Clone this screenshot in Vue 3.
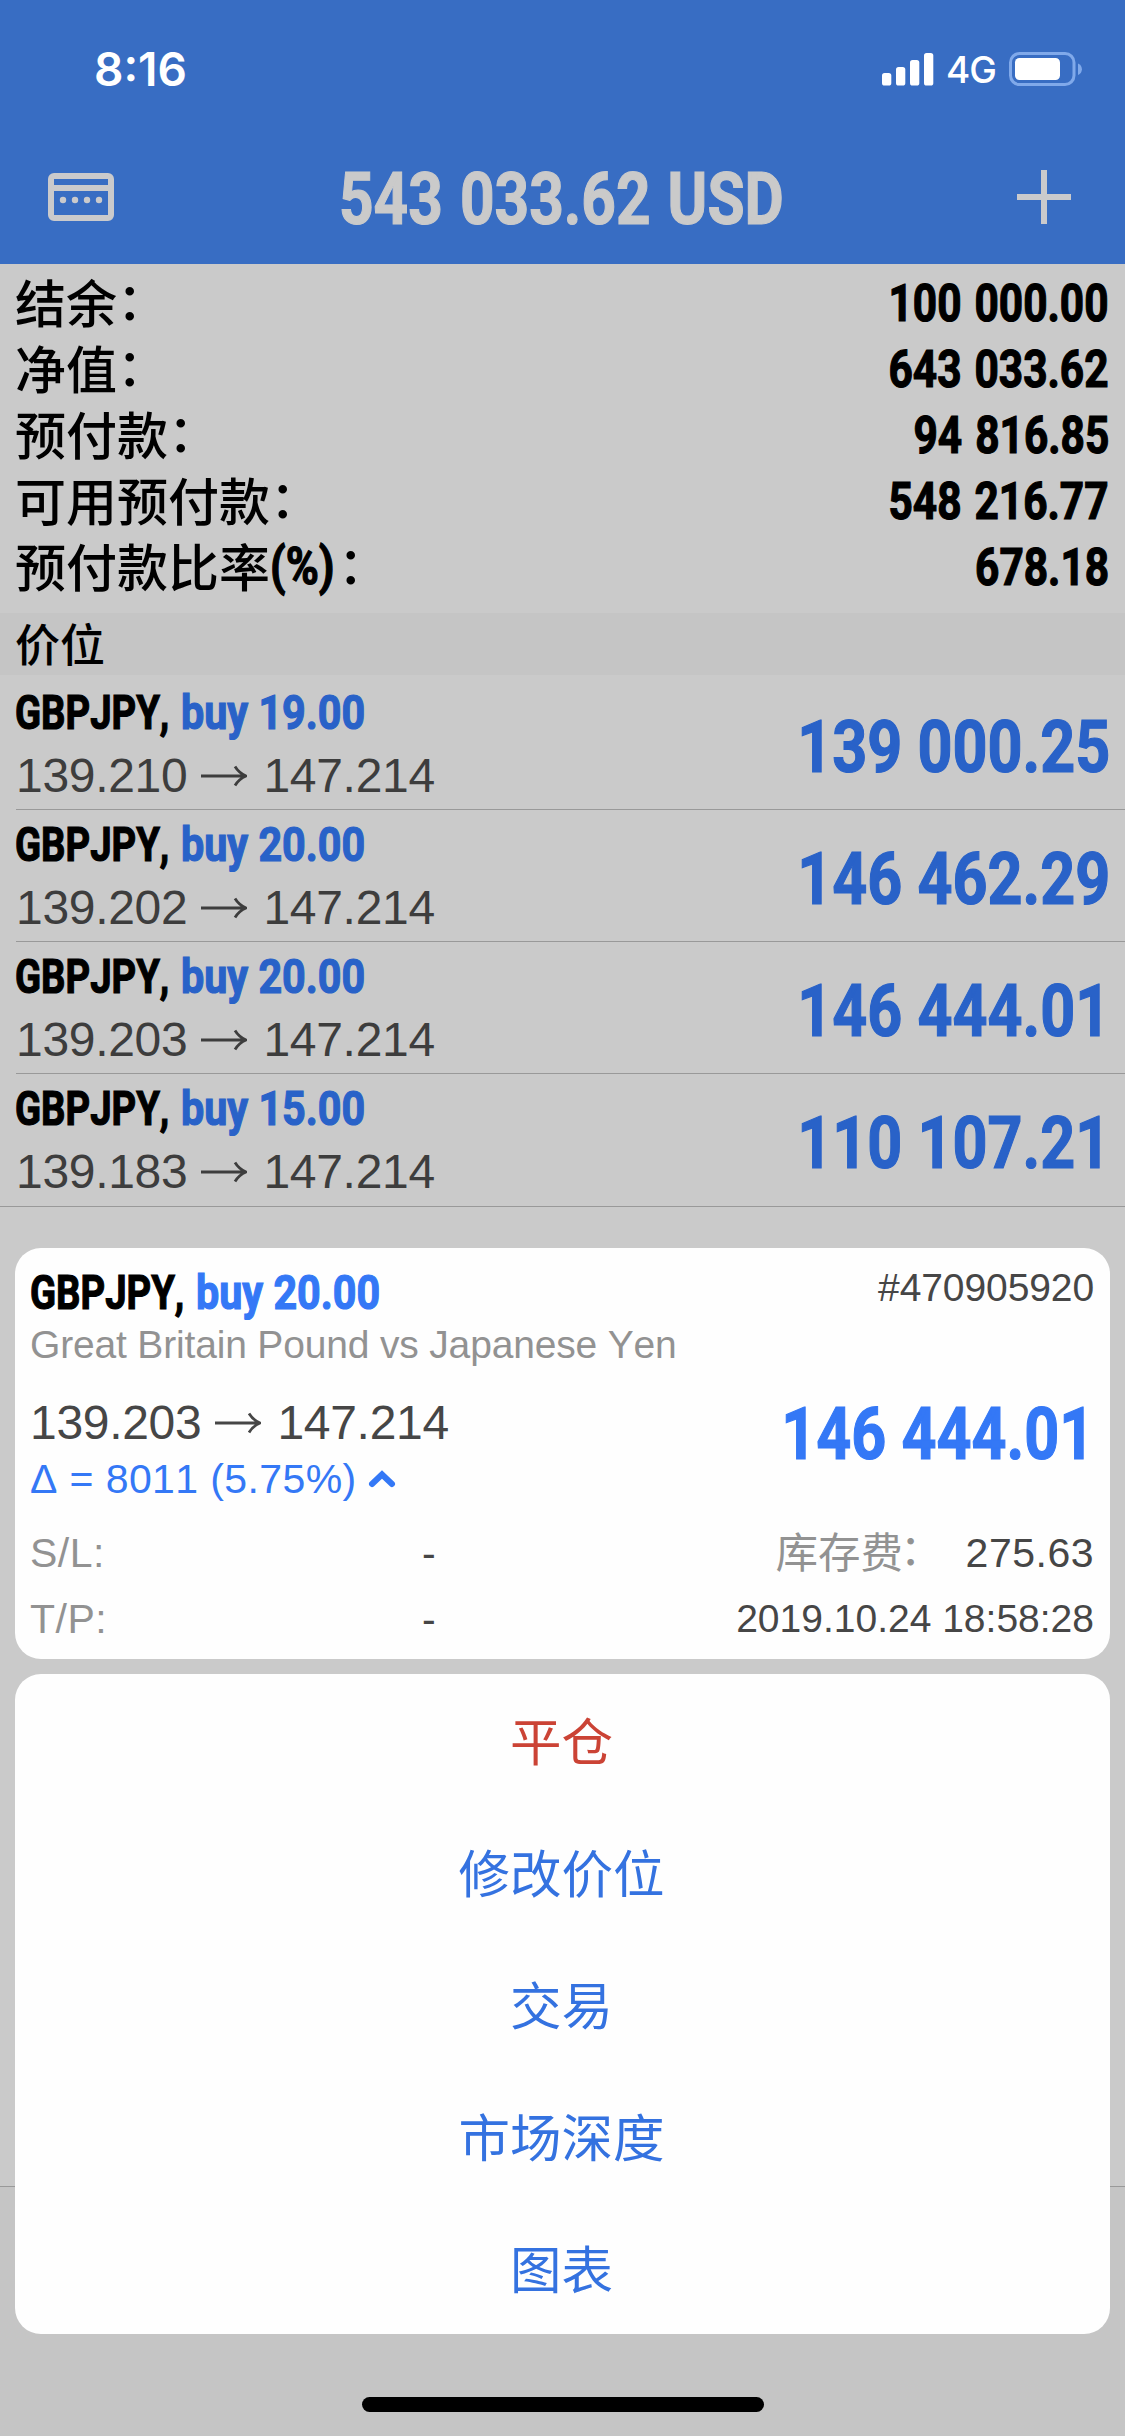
<script setup>
const account = [
  { label: '结余', value: '100 000.00' },
  { label: '净值', value: '643 033.62' },
  { label: '预付款', value: '94 816.85' },
  { label: '可用预付款', value: '548 216.77' },
  { label: '预付款比率', unit: '(%)', value: '678.18' },
]

const positions = [
  { volume: '19.00', open: '139.210', current: '147.214', profit: '139 000.25' },
  { volume: '20.00', open: '139.202', current: '147.214', profit: '146 462.29' },
  { volume: '20.00', open: '139.203', current: '147.214', profit: '146 444.01' },
  { volume: '15.00', open: '139.183', current: '147.214', profit: '110 107.21' },
]

const actions = [
  { label: '平仓', danger: true },
  { label: '修改价位' },
  { label: '交易' },
  { label: '市场深度' },
  { label: '图表' },
]
</script>

<template>
  <div class="screen">
    <header class="header">
      <div class="status">
        <span class="time">8:16</span>
        <div class="status-icons">
          <svg class="signal" width="52" height="33" viewBox="0 0 52 33" fill="#fff">
            <rect x="0" y="20" width="9.3" height="12.5" rx="2.6" />
            <rect x="14" y="14" width="9.3" height="18.5" rx="2.6" />
            <rect x="28" y="7" width="9.3" height="25.5" rx="2.6" />
            <rect x="42" y="0" width="9.3" height="32.5" rx="2.6" />
          </svg>
          <span class="network">4G</span>
          <svg class="battery" width="74" height="34" viewBox="0 0 74 34">
            <rect x="1.5" y="1.5" width="63.5" height="31" rx="9" fill="none" stroke="#80a9ea" stroke-width="3" />
            <rect x="6" y="6" width="45" height="22" rx="4.5" fill="#fff" />
            <path d="M69 11.5c5.200 2 5.200 9.500 0 11.500z" fill="#80a9ea" />
          </svg>
        </div>
      </div>
      <div class="nav">
        <svg width="66" height="48" viewBox="0 0 66 48">
          <rect x="3" y="3" width="60" height="42" rx="3" fill="none" stroke="#cacacc" stroke-width="6" />
          <path d="M3 15h60" stroke="#cacacc" stroke-width="6" />
          <g fill="#cacacc">
            <circle cx="15" cy="27" r="3.200" /><circle cx="27" cy="27" r="3.200" />
            <circle cx="39" cy="27" r="3.200" /><circle cx="51" cy="27" r="3.200" />
          </g>
        </svg>
        <h1 class="title"><span>543 033.62 USD</span></h1>
        <svg width="54" height="54" viewBox="0 0 54 54">
          <path d="M27 0v54M0 27h54" stroke="#cacacc" stroke-width="6" />
        </svg>
      </div>
    </header>

    <section class="account">
      <div v-for="row in account" :key="row.label" class="account-row">
        <span class="account-label">
          <span>{{ row.label }}</span><span v-if="row.unit" class="unit">{{ row.unit }}</span><span class="colon">：</span>
        </span>
        <span class="account-value">{{ row.value }}</span>
      </div>
    </section>

    <h2 class="section-title"><span>价位</span></h2>

    <ul class="positions">
      <li v-for="p in positions" :key="p.profit" class="position">
        <div>
          <div class="deal"><b class="symbol">GBPJPY,</b><b class="side">buy {{ p.volume }}</b></div>
          <div class="prices">
            <span>{{ p.open }}</span>
            <svg width="46" height="22" viewBox="0 0 46 22" fill="none" stroke="currentColor" stroke-width="2.800">
              <path d="M0 11h44M34 1.500Q38 8 45 11Q38 14 34 20.500" />
            </svg>
            <span>{{ p.current }}</span>
          </div>
        </div>
        <b class="profit">{{ p.profit }}</b>
      </li>
    </ul>

    <div class="blank"></div>
    <div class="footer"></div>

    <div class="overlay">
      <section class="card details">
        <div class="details-top">
          <div class="deal"><b class="symbol">GBPJPY,</b><b class="side">buy 20.00</b></div>
          <span class="ticket">#470905920</span>
        </div>
        <p class="description">Great Britain Pound vs Japanese Yen</p>
        <div class="details-main">
          <div>
            <div class="prices">
              <span>139.203</span>
              <svg width="46" height="22" viewBox="0 0 46 22" fill="none" stroke="currentColor" stroke-width="2.800">
                <path d="M0 11h44M34 1.500Q38 8 45 11Q38 14 34 20.500" />
              </svg>
              <span>147.214</span>
            </div>
            <div class="delta">
              <span>Δ = 8011 (5.75%)</span>
              <svg width="28" height="20" viewBox="0 0 28 20" fill="none" stroke="currentColor" stroke-width="6" stroke-linecap="round">
                <path d="M4 15L14 5.500L24 15" />
              </svg>
            </div>
          </div>
          <b class="profit">146 444.01</b>
        </div>
        <div class="meta">
          <span class="meta-key">S/L:</span><span class="dash">-</span>
          <span class="swap-key">库存费<span class="colon">：</span></span><span class="swap">275.63</span>
        </div>
        <div class="meta">
          <span class="meta-key">T/P:</span><span class="dash">-</span>
          <span class="date">2019.10.24 18:58:28</span>
        </div>
      </section>

      <nav class="card menu">
        <button v-for="a in actions" :key="a.label" class="action" :class="{ danger: a.danger }">
          <span>{{ a.label }}</span>
        </button>
      </nav>

      <div class="home-indicator"></div>
    </div>
  </div>
</template>

<style>
body {
  margin: 0;
}
</style>

<style scoped>
.screen {
  position: relative;
  display: flex;
  flex-direction: column;
  width: 1125px;
  height: 2436px;
  overflow: hidden;
  background: #cacaca;
  color: #000;
  font-family: "Liberation Sans", "Noto Sans CJK SC", sans-serif;
  font-kerning: none;
  white-space: nowrap;
}

.screen svg {
  display: block;
  flex: none;
}

/* Condensed bold figures and captions */
.title,
.unit,
.account-value,
.symbol,
.side,
.profit {
  font-family: Roboto, "Liberation Sans", sans-serif;
  font-weight: 700;
  -webkit-text-stroke: 1.2px currentColor;
}

.header {
  height: 264px;
  flex: none;
  background: #386dc3;
}

.status {
  display: flex;
  justify-content: space-between;
  align-items: center;
  height: 126px;
  padding: 6px 42px 0 94px;
  color: #fff;
  font-family: Inter, sans-serif;
}

.time {
  font-size: 46px;
  font-weight: 600;
  line-height: 60px;
}

.status-icons {
  display: flex;
  align-items: center;
}

.network {
  width: 75px;
  padding-left: 12px;
  box-sizing: border-box;
  font-size: 37px;
  font-weight: 450;
  letter-spacing: -1px;
  line-height: 60px;
  padding-top: 2px;
}

.nav {
  display: flex;
  justify-content: space-between;
  align-items: center;
  height: 130px;
  padding: 0 54px 0 48px;
}

.title {
  display: flex;
  justify-content: center;
  width: 442px;
  margin: 0 8px 0 0;
  padding-top: 5px;
  color: #cacaca;
  font-size: 72px;
  line-height: 80px;
  word-spacing: 2.5px;
}

.title span {
  transform: scaleX(0.838);
}

.account {
  flex: none;
  height: 343px;
  padding: 6px 16px 0;
}

.account-row {
  display: flex;
  justify-content: space-between;
  align-items: center;
  height: 66px;
}

.account-label {
  display: flex;
  align-items: center;
  height: 60px;
  margin-left: -1px;
  padding-bottom: 5px;
  font-family: "Noto Sans CJK SC", sans-serif;
  font-size: 51px;
  font-weight: 500;
  line-height: 60px;
}

.colon {
  position: relative;
  top: -3px;
  left: 0;
}

.unit {
  width: 68px;
  padding-top: 5px;
  transform: scaleX(0.88);
  transform-origin: left;
}

.account-value {
  font-size: 51px;
  word-spacing: 3px;
  transform: scaleX(0.832);
  transform-origin: right;
}

.section-title {
  display: flex;
  align-items: center;
  flex: none;
  height: 62px;
  margin: 0;
  padding: 0 15px;
  background: #c5c5c5;
  font-family: "Noto Sans CJK SC", sans-serif;
  font-size: 45px;
  font-weight: 500;
  line-height: 56px;
}

.section-title span {
  padding-bottom: 2px;
}

.positions {
  flex: none;
  margin: 0;
  padding: 3px 0 0;
  border-bottom: 1px solid #999;
  list-style: none;
}

.position {
  display: flex;
  justify-content: space-between;
  height: 131px;
  margin-left: 16px;
  padding-right: 15px;
  border-bottom: 1px solid #999;
}

.position:last-child {
  height: 132px;
  border-bottom: 0;
}

.deal {
  display: flex;
  height: 56px;
  margin-left: -1px;
  padding-top: 7px;
  font-size: 48px;
  line-height: 56px;
}

.symbol {
  width: 166px;
  transform: scaleX(0.797);
  transform-origin: left;
}

.symbol,
.side {
  flex: none;
}

.side {
  color: #2962c8;
  transform: scaleX(0.86);
  transform-origin: left;
}

.prices {
  display: flex;
  align-items: center;
  height: 70px;
  color: #3d3d3d;
  font-size: 48px;
  letter-spacing: -0.3px;
  line-height: 70px;
}

.prices svg {
  margin: 0 16px 0 14px;
}

.profit {
  color: #2962c8;
  font-size: 72px;
  line-height: 140px;
  transform: scaleX(0.848);
  transform-origin: right;
}

.blank {
  flex: none;
  height: 979px;
  border-bottom: 1px solid #999;
}

.footer {
  flex: 1;
  background: #c5c5c5;
}

/* Action sheet over the trade list */
.overlay {
  position: absolute;
  inset: 1248px 15px 0 15px;
  display: flex;
  flex-direction: column;
  align-items: stretch;
}

.card {
  flex: none;
  box-sizing: border-box;
  border-radius: 26px;
  background: #fefefe;
}

.details {
  height: 411px;
  margin-bottom: 15px;
  padding: 10px 16px 0 15px;
}

.details-top {
  display: flex;
  justify-content: space-between;
  height: 64px;
}

.details .deal {
  margin-left: 0;
}

.details .side,
.details .profit,
.delta {
  color: #3478f6;
}

.ticket {
  color: #464646;
  font-size: 39px;
  letter-spacing: -0.1px;
  line-height: 60px;
}

.description {
  margin: 0;
  color: #929292;
  font-size: 39px;
  letter-spacing: -0.17px;
  line-height: 45px;
}

.details-main {
  display: flex;
  justify-content: space-between;
  box-sizing: border-box;
  height: 153px;
  padding-top: 23px;
}

.details-main .prices {
  height: 65px;
  line-height: 65px;
  color: #464646;
}

.details-main .profit {
  line-height: 90px;
}

.delta {
  display: flex;
  align-items: center;
  gap: 11px;
  font-size: 41px;
  letter-spacing: 0.4px;
  line-height: 48px;
}

.meta {
  display: flex;
  align-items: center;
  height: 66px;
  color: #464646;
  font-size: 41px;
}

.meta-key {
  width: 392px;
  color: #929292;
  letter-spacing: 0.5px;
}

.dash {
  flex: 1;
}

.swap-key {
  padding-bottom: 6px;
  color: #929292;
  font-family: "Noto Sans CJK SC", sans-serif;
  font-size: 42.5px;
  font-weight: 400;
  line-height: 56px;
}

.swap-key .colon {
  left: -3px;
}

.swap {
  margin-left: 20px;
  letter-spacing: 0.5px;
}

.date {
  font-size: 39px;
}

.menu {
  display: flex;
  flex-direction: column;
  height: 660px;
}

.action {
  flex: 1;
  padding: 0 2px 4px 0;
  border: 0;
  background: none;
  color: #3472e0;
  font-family: "Noto Sans CJK SC", sans-serif;
  font-size: 51.5px;
  font-weight: 400;
}

.action.danger {
  color: #cb4335;
}

.home-indicator {
  width: 402px;
  height: 15px;
  margin: 63px auto 0;
  border-radius: 8px;
  background: #000;
}
</style>
